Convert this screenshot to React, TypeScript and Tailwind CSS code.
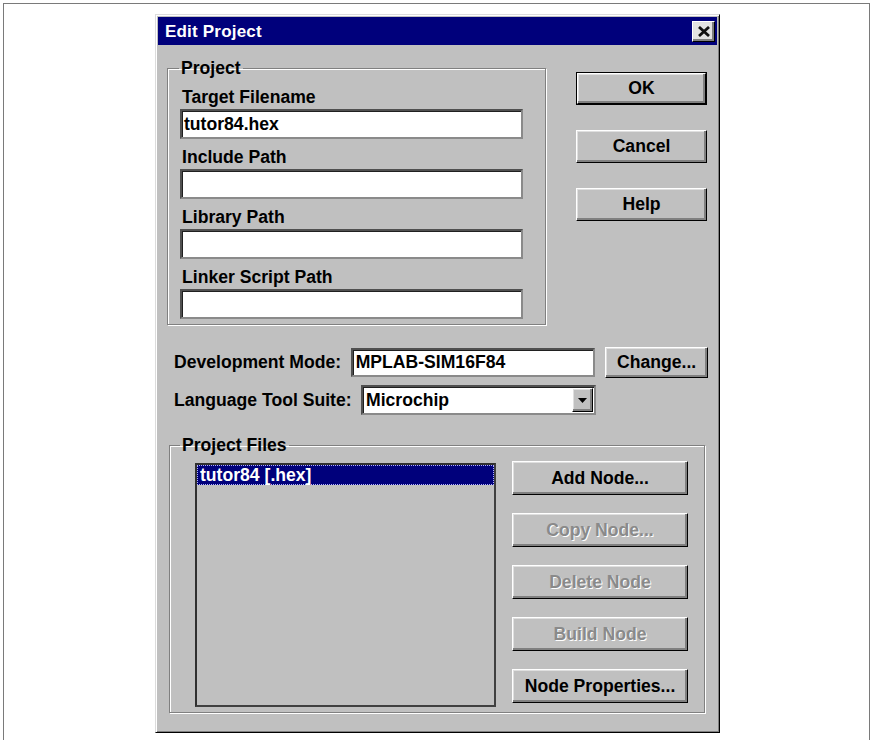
import React from "react";

const font = "font-['Liberation_Sans',Arial,sans-serif]";

const raised =
  "border border-t-white border-l-white border-b-black border-r-black shadow-[inset_-2px_-2px_0_#808080,inset_1px_1px_0_#dfdfdf]";

const sunken =
  "border-2 border-t-[#505050] border-l-[#505050] border-b-[#8a8a8a] border-r-[#8a8a8a] shadow-[inset_1px_1px_0_#202020]";

const Button: React.FC<{
  label: string;
  disabled?: boolean;
  isDefault?: boolean;
  className?: string;
}> = ({ label, disabled, isDefault, className = "" }) => {
  const text = disabled
    ? "text-[#8a8a8a] [text-shadow:1px_1px_0_#ffffff]"
    : "text-black";
  if (isDefault) {
    return (
      <div className={`border border-black bg-[#c0c0c0] ${className}`}>
        <div className={`w-full h-full flex items-center justify-center ${raised} ${text}`}>
          {label}
        </div>
      </div>
    );
  }
  return (
    <div className={`flex items-center justify-center bg-[#c0c0c0] ${raised} ${text} ${className}`}>
      {label}
    </div>
  );
};

const Field: React.FC<{ label: string; value?: string; first?: boolean }> = ({
  label,
  value,
  first,
}) => (
  <div className={first ? "" : "mt-[8px]"}>
    <div className="leading-5 h-5 pl-[2px]">{label}</div>
    <div className={`mt-[2px] w-[343px] h-[30px] bg-white flex items-center pl-[2px] ${sunken}`}>
      {value}
    </div>
  </div>
);

export default function App() {
  return (
    <div className={`w-[873px] h-[740px] bg-white pt-[3px] px-[3px] overflow-hidden ${font} text-[17.6px] font-bold`}>
      <div className="h-full border-t border-x border-[#7a7a7a] pt-[10px] pl-[151px]">
        {/* dialog window */}
        <div className="w-[565px] h-[719px] bg-[#c0c0c0] border border-t-[#dcdcdc] border-l-[#dcdcdc] border-b-black border-r-black shadow-[inset_1px_1px_0_#ffffff,inset_-1px_-1px_0_#808080] p-[2px]">
          {/* title bar */}
          <div className="h-[28px] bg-[#00007b] flex items-center justify-between pl-[7px] pr-[2px]">
            <span className="text-white text-[17px] tracking-[0.2px] pt-[1px]">Edit Project</span>
            <div className={`w-[23px] h-[21px] bg-[#e2e2e2] flex items-center justify-center ${raised}`}>
              <svg width="12" height="11" viewBox="0 0 12 11">
                <path d="M1 1 L11 10 M11 1 L1 10" stroke="#111" strokeWidth="2.8" />
              </svg>
            </div>
          </div>

          <div className="px-[9px]">
            {/* top section */}
            <div className="flex items-start mt-[13px]">
              <fieldset className="w-[379px] border border-[#808080] shadow-[inset_1px_1px_0_#ffffff,1px_1px_0_#ffffff] pl-[12px] pr-[12px] pt-[9px] pb-[5px]">
                <legend className="px-[2px] leading-5 -ml-[1px]">Project</legend>
                <Field first label="Target Filename" value="tutor84.hex" />
                <Field label="Include Path" />
                <Field label="Library Path" />
                <Field label="Linker Script Path" />
              </fieldset>
              <div className="ml-[30px] pt-[14px] flex flex-col gap-[25px]">
                <Button isDefault label="OK" className="w-[131px] h-[33px]" />
                <Button label="Cancel" className="w-[131px] h-[33px]" />
                <Button label="Help" className="w-[131px] h-[33px]" />
              </div>
            </div>

            {/* development mode */}
            <div className="flex items-center mt-[22px] pl-[7px]">
              <div className="w-[177px]">Development Mode:</div>
              <div className={`w-[245px] h-[29px] bg-white flex items-center pl-[3px] ${sunken}`}>
                MPLAB-SIM16F84
              </div>
              <Button label="Change..." className="ml-[10px] w-[103px] h-[31px]" />
            </div>

            {/* language tool suite */}
            <div className="flex items-center mt-[7px] pl-[7px]">
              <div className="w-[187px]">Language Tool Suite:</div>
              <div className={`w-[235px] h-[30px] bg-white flex items-center justify-between pl-[3px] pr-[1px] ${sunken}`}>
                <span>Microchip</span>
                <div className={`w-[21px] h-[24px] bg-[#c0c0c0] flex items-center justify-center ${raised}`}>
                  <svg width="9" height="5" viewBox="0 0 9 5">
                    <path d="M0 0 H9 L4.5 5 Z" fill="#000" />
                  </svg>
                </div>
              </div>
            </div>

            {/* project files */}
            <fieldset className="mt-[20px] ml-[2px] w-[536px] border border-[#808080] shadow-[inset_1px_1px_0_#ffffff,1px_1px_0_#ffffff] pl-[25px] pr-[16px] pt-[6px] pb-[5px]">
              <legend className="px-[2px] leading-5 -ml-[15px]">Project Files</legend>
              <div className="flex items-start">
                <div className="mt-[2px] w-[301px] h-[244px] bg-[#c0c0c0] border-2 border-t-[#303030] border-l-[#303030] border-b-[#404040] border-r-[#404040]">
                  <div className="h-[20px] bg-[#00007b] text-white leading-[18px] pl-[2px] border border-dotted border-[#b0b0ff]">
                    tutor84 [.hex]
                  </div>
                </div>
                <div className="ml-[16px] flex flex-col gap-[18px]">
                  <Button label="Add Node..." className="w-[176px] h-[34px]" />
                  <Button disabled label="Copy Node..." className="w-[176px] h-[34px]" />
                  <Button disabled label="Delete Node" className="w-[176px] h-[34px]" />
                  <Button disabled label="Build Node" className="w-[176px] h-[34px]" />
                  <Button label="Node Properties..." className="w-[176px] h-[34px]" />
                </div>
              </div>
            </fieldset>
          </div>
        </div>
      </div>
    </div>
  );
}
